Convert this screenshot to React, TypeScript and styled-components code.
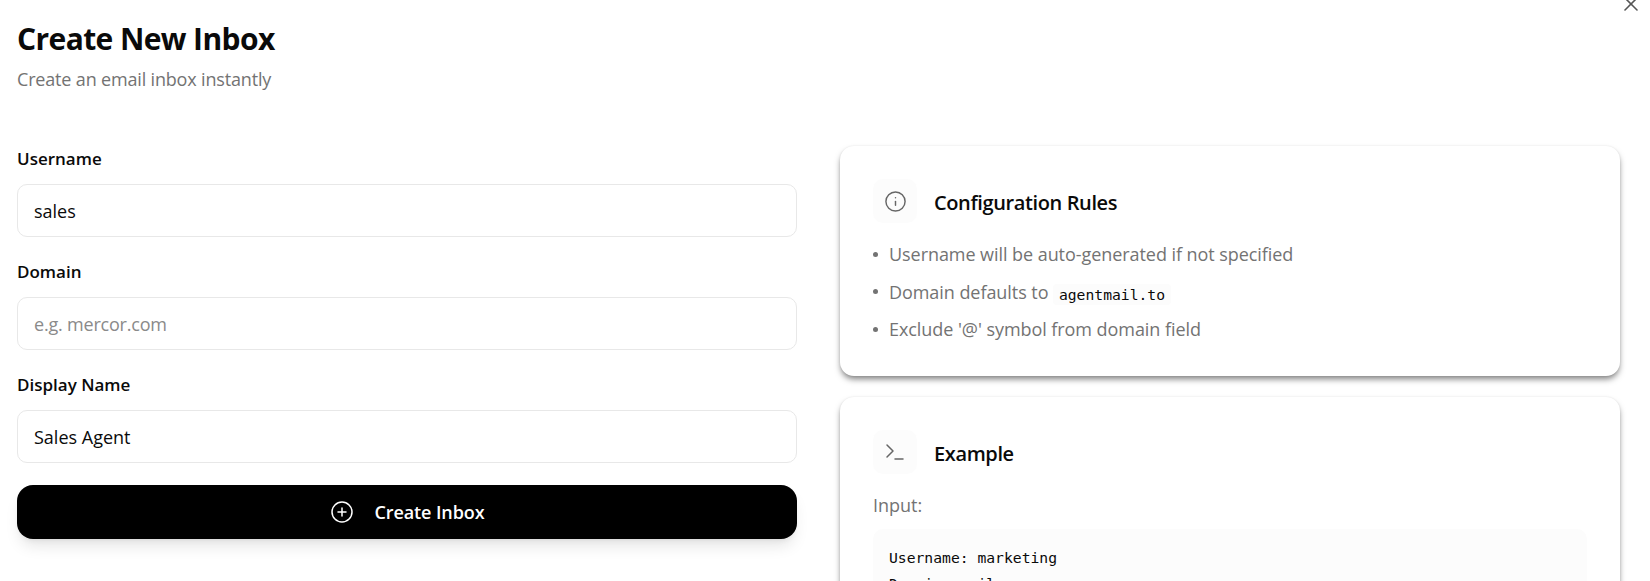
import styled, { createGlobalStyle } from 'styled-components';
import { CirclePlus, Info, Terminal, X } from 'lucide-react';

const GlobalStyle = createGlobalStyle`
    * {
        box-sizing: border-box;
    }
    html, body {
        margin: 0;
        height: 100%;
        background: #fff;
        overflow: hidden;
    }
    body {
        font-family: "Open Sans", "Noto Sans", sans-serif;
        color: #0a0a0a;
    }
`

function App() {
    return (
        <StyledPage>
            <GlobalStyle/>
            <StyledClose><X size={24} strokeWidth={1.6}/></StyledClose>
            <StyledHeader>
                <StyledTitle>Create New Inbox</StyledTitle>
                <StyledSubtitle>Create an email inbox instantly</StyledSubtitle>
            </StyledHeader>
            <StyledColumns>
                <StyledForm>
                    <StyledField>
                        <StyledLabel>Username</StyledLabel>
                        <StyledInput defaultValue="sales"/>
                    </StyledField>
                    <StyledField>
                        <StyledLabel>Domain</StyledLabel>
                        <StyledInput placeholder="e.g. mercor.com"/>
                    </StyledField>
                    <StyledField>
                        <StyledLabel>Display Name</StyledLabel>
                        <StyledInput defaultValue="Sales Agent"/>
                    </StyledField>
                    <StyledSubmit>
                        <CirclePlus size={24} strokeWidth={1.5}/>
                        Create Inbox
                    </StyledSubmit>
                </StyledForm>
                <StyledSide>
                    <StyledCard>
                        <StyledCardHead>
                            <StyledIconBox><Info size={23} strokeWidth={1.5}/></StyledIconBox>
                            <StyledCardTitle>Configuration Rules</StyledCardTitle>
                        </StyledCardHead>
                        <StyledRules>
                            <StyledRule>Username will be auto-generated if not specified</StyledRule>
                            <StyledRule>Domain defaults to <StyledCode>agentmail.to</StyledCode></StyledRule>
                            <StyledRule>Exclude '@' symbol from domain field</StyledRule>
                        </StyledRules>
                    </StyledCard>
                    <StyledCard>
                        <StyledCardHead>
                            <StyledIconBox><Terminal size={24} strokeWidth={1.5}/></StyledIconBox>
                            <StyledCardTitle>Example</StyledCardTitle>
                        </StyledCardHead>
                        <StyledMuted>Input:</StyledMuted>
                        <StyledBlock>
                            <StyledBlockLine>Username: marketing</StyledBlockLine>
                            <StyledBlockLine>Domain: mail.com</StyledBlockLine>
                        </StyledBlock>
                    </StyledCard>
                </StyledSide>
            </StyledColumns>
        </StyledPage>
    );
}

export default App;

const StyledPage = styled.div`
    position: relative;
    height: 581px;
    overflow: hidden;
    padding: 19px 30px 0 17px;
`

const StyledClose = styled.div`
    position: absolute;
    top: -8px;
    right: 7px;
    color: #555;
    line-height: 0;
`

const StyledHeader = styled.div`
    height: 127px;
`

const StyledTitle = styled.h1`
    margin: 0;
    font-size: 30px;
    line-height: 40px;
    font-weight: 700;
    letter-spacing: -0.6px;
    color: #0a0a0a;
`

const StyledSubtitle = styled.p`
    margin: 6px 0 0;
    font-size: 18px;
    line-height: 28px;
    letter-spacing: -0.17px;
    color: #737373;
`

const StyledColumns = styled.div`
    display: grid;
    grid-template-columns: 780px 780px;
    column-gap: 43px;
`

const StyledForm = styled.div`
    display: flex;
    flex-direction: column;
    padding-top: 1px;
`

const StyledField = styled.div`
    display: flex;
    flex-direction: column;
    gap: 13px;
    margin-bottom: 23px;

    &:nth-of-type(3) {
        margin-bottom: 22px;
    }
`

const StyledLabel = styled.label`
    font-size: 17px;
    line-height: 24px;
    font-weight: 600;
    color: #0a0a0a;
`

const StyledInput = styled.input`
    height: 53px;
    width: 100%;
    padding: 0 16px;
    border: 1px solid #e8e8e8;
    border-radius: 10px;
    background: #fff;
    font-family: inherit;
    font-size: 18px;
    color: #0a0a0a;
    outline: none;

    &::placeholder {
        color: #8a8a8a;
        letter-spacing: -0.2px;
    }
`

const StyledSubmit = styled.button`
    display: flex;
    align-items: center;
    justify-content: center;
    gap: 21px;
    height: 54px;
    padding-bottom: 2px;
    border: none;
    border-radius: 16px;
    background: #000;
    color: #fff;
    font-family: inherit;
    font-size: 18px;
    font-weight: 600;
    letter-spacing: -0.1px;
    box-shadow: 0 10px 15px -3px rgba(0, 0, 0, 0.1), 0 4px 6px -4px rgba(0, 0, 0, 0.1);
`

const StyledSide = styled.div`
    display: flex;
    flex-direction: column;
    gap: 21px;
`

const StyledCard = styled.div`
    padding: 33px;
    border-radius: 14px;
    background: #fff;
    box-shadow: 0 4px 6px -1px rgba(0, 0, 0, 0.5), 0 0 2px rgba(0, 0, 0, 0.08);
`

const StyledCardHead = styled.div`
    display: flex;
    align-items: center;
    gap: 17px;
    margin-bottom: 17px;
`

const StyledIconBox = styled.div`
    display: flex;
    align-items: center;
    justify-content: center;
    width: 44px;
    height: 44px;
    border-radius: 10px;
    background: #fcfcfc;
    color: #666;
`

const StyledCardTitle = styled.h3`
    margin: 0;
    padding-top: 3px;
    font-size: 20px;
    line-height: 28px;
    font-weight: 600;
    letter-spacing: -0.38px;
    color: #0a0a0a;
`

const StyledRules = styled.ul`
    margin: 0;
    padding: 0;
    list-style: none;
    display: flex;
    flex-direction: column;
    gap: 9.5px;
`

const StyledRule = styled.li`
    display: flex;
    align-items: center;
    height: 28px;
    font-size: 18px;
    letter-spacing: -0.06px;
    color: #737373;

    &::before {
        content: "";
        width: 5px;
        height: 5px;
        margin-right: 11px;
        border-radius: 50%;
        background: #737373;
    }
`

const StyledCode = styled.code`
    margin: 5px 0 0 5px;
    padding: 2px 5.5px;
    border-radius: 4px;
    background: #fcfcfc;
    font-family: "DejaVu Sans Mono", monospace;
    font-size: 14.7px;
    letter-spacing: 0;
    color: #0a0a0a;
`

const StyledMuted = styled.p`
    margin: 0 0 10px;
    font-size: 18px;
    line-height: 28px;
    color: #737373;
`

const StyledBlock = styled.div`
    padding: 16px 16px;
    border-radius: 10px;
    background: #fcfcfc;
`

const StyledBlockLine = styled.div`
    font-family: "DejaVu Sans Mono", monospace;
    font-size: 14.7px;
    line-height: 26px;
    color: #0a0a0a;
`
